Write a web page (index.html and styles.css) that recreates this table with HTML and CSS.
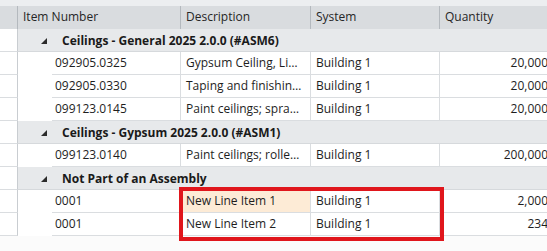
FILE: index.html
```html
<!DOCTYPE html>
<html>
<head>
<meta charset="utf-8">
<link rel="stylesheet" href="styles.css">
</head>
<body>
<div class="view">
  <div class="topstrip"></div>
  <div class="grid">
    <div class="row header">
      <div class="gutter"></div>
      <div class="hcell c-item">Item Number</div>
      <div class="hcell c-desc">Description</div>
      <div class="hcell c-sys">System</div>
      <div class="hcell c-qty">Quantity</div>
    </div>

    <div class="row group">
      <div class="gutter"></div>
      <div class="gcell"><svg class="tri" width="6" height="6" viewBox="0 0 6 6"><polygon points="6,0 6,6 0,6" fill="#2b2b2b"/></svg>Ceilings - General 2025 2.0.0 (#ASM6)</div>
    </div>
    <div class="row data">
      <div class="gutter"></div><div class="indent"></div>
      <div class="cell c-item first">092905.0325</div>
      <div class="cell c-desc">Gypsum Ceiling, Li…</div>
      <div class="cell c-sys">Building 1</div>
      <div class="cell c-qty num">20,000</div>
    </div>
    <div class="row data">
      <div class="gutter"></div><div class="indent"></div>
      <div class="cell c-item first">092905.0330</div>
      <div class="cell c-desc">Taping and finishin…</div>
      <div class="cell c-sys">Building 1</div>
      <div class="cell c-qty num">20,000</div>
    </div>
    <div class="row data">
      <div class="gutter"></div><div class="indent"></div>
      <div class="cell c-item first">099123.0145</div>
      <div class="cell c-desc">Paint ceilings; spra…</div>
      <div class="cell c-sys">Building 1</div>
      <div class="cell c-qty num">20,000</div>
    </div>

    <div class="row group">
      <div class="gutter"></div>
      <div class="gcell"><svg class="tri" width="6" height="6" viewBox="0 0 6 6"><polygon points="6,0 6,6 0,6" fill="#2b2b2b"/></svg>Ceilings - Gypsum 2025 2.0.0 (#ASM1)</div>
    </div>
    <div class="row data">
      <div class="gutter"></div><div class="indent"></div>
      <div class="cell c-item first">099123.0140</div>
      <div class="cell c-desc">Paint ceilings; rolle…</div>
      <div class="cell c-sys">Building 1</div>
      <div class="cell c-qty num">200,000</div>
    </div>

    <div class="row group">
      <div class="gutter"></div>
      <div class="gcell"><svg class="tri" width="6" height="6" viewBox="0 0 6 6"><polygon points="6,0 6,6 0,6" fill="#2b2b2b"/></svg>Not Part of an Assembly</div>
    </div>
    <div class="row data">
      <div class="gutter"></div><div class="indent"></div>
      <div class="cell c-item first">0001</div>
      <div class="cell c-desc selected">New Line Item 1</div>
      <div class="cell c-sys">Building 1</div>
      <div class="cell c-qty num">2,000</div>
    </div>
    <div class="row data">
      <div class="gutter"></div><div class="indent"></div>
      <div class="cell c-item first">0001</div>
      <div class="cell c-desc">New Line Item 2</div>
      <div class="cell c-sys">Building 1</div>
      <div class="cell c-qty num">234</div>
    </div>
  </div>
  <div class="highlight"></div>
</div>
</body>
</html>
```

FILE: styles.css
```css
* { box-sizing: border-box; }
html, body { margin: 0; padding: 0; }
body {
  width: 547px;
  height: 251px;
  overflow: hidden;
  background: #fbfbfb;
  font-family: "Open Sans", "Noto Sans", sans-serif;
  font-size: 12px;
  color: #1e1e1e;
}
.view { position: relative; width: 547px; height: 251px; overflow: hidden; }
.topstrip { height: 6px; background: #eceef0; }
.grid { width: 560px; }
.row { display: flex; height: 23px; }
.gutter {
  width: 18px;
  flex: none;
  background: #ffffff;
  border-right: 1px solid #c9cdd1;
  border-bottom: 1px solid #dadde0;
}
.header { background: #d9dcdf; }
.header .gutter { background: #d9dcdf; border-bottom: none; border-right: 1px solid #b4b9be; }
.hcell {
  flex: none;
  height: 23px;
  line-height: 22px;
  padding-left: 5px;
  border-right: 1px solid #b4b9be;
  white-space: nowrap;
  color: #262626;
}
.c-item { width: 163px; }
.c-desc { width: 130px; }
.c-sys { width: 129px; }
.c-qty { width: 111px; border-right: none; }
.group .gcell {
  flex: 1;
  display: flex;
  align-items: center;
  background: #e7e9eb;
  border-bottom: 1px solid #d6d9dc;
  font-weight: 700;
  padding-left: 23px;
  color: #1a1a1a;
  white-space: nowrap;
}
.tri { margin-right: 15px; margin-top: 1px; }
.data { background: #ffffff; }
.indent { width: 34px; flex: none; background: #ffffff; }
.cell {
  flex: none;
  height: 23px;
  line-height: 22px;
  padding-left: 5px;
  border-right: 1px solid #dadde0;
  border-bottom: 1px solid #dadde0;
  white-space: nowrap;
  overflow: hidden;
  background: #ffffff;
}
.cell.first { width: 129px; padding-left: 3px; }
.cell.num { text-align: right; padding-right: 2px; padding-left: 0; }
.cell.selected { background: #fdebd6; }
.highlight {
  position: absolute;
  left: 179px;
  top: 187px;
  width: 265px;
  height: 54px;
  border: 4px solid #e0161c;
}
```
